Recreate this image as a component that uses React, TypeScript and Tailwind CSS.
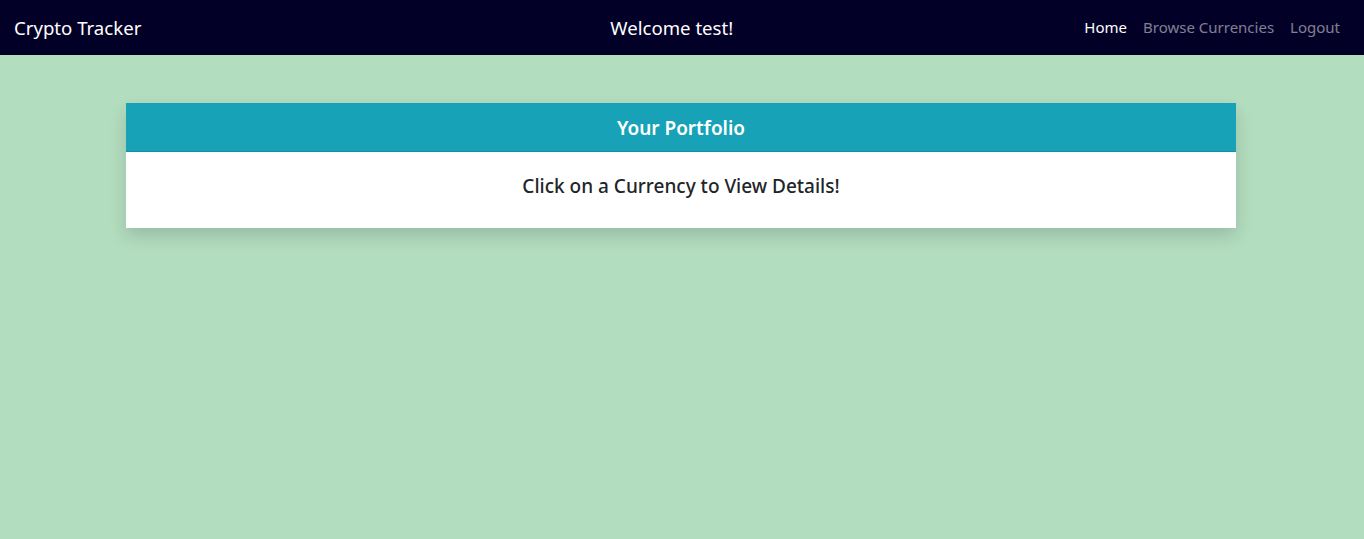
export default function App() {
  return (
    <div className="min-h-[539px] bg-[#b3ddbf] font-['Noto_Sans',sans-serif]">
      <nav className="flex h-[55px] items-center bg-[#030027] px-[14px]">
        <span className="text-[18.6px] text-white">Crypto Tracker</span>
        <span className="ml-[469px] text-[18.6px] text-white">Welcome test!</span>
        <ul className="ml-auto flex items-center gap-[16px] pr-[10px] text-[15px]">
          <li className="text-white">Home</li>
          <li className="text-white/50">Browse Currencies</li>
          <li className="text-white/50">Logout</li>
        </ul>
      </nav>

      <main className="pl-[126px] pr-[128px] pt-[48px]">
        <section className="bg-white shadow-[0_8px_16px_rgba(0,0,0,0.15)]">
          <header className="flex h-[49px] items-center justify-center border-b border-[#1591a5] bg-[#17a2b8] pt-[2px]">
            <h2 className="text-[19px] font-semibold text-white">Your Portfolio</h2>
          </header>
          <div className="flex h-[76px] items-center justify-center">
            <h5 className="pb-[7px] text-[19px] font-medium text-[#212529]">
              Click on a Currency to View Details!
            </h5>
          </div>
        </section>
      </main>
    </div>
  );
}
